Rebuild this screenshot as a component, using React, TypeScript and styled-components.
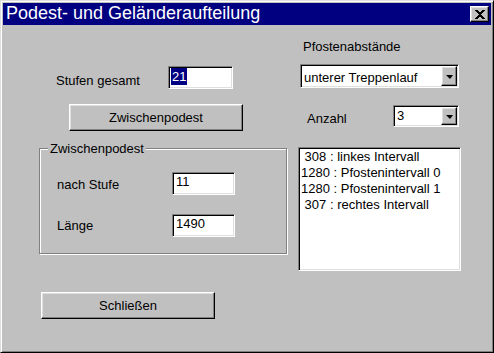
import React from 'react';
import styled, { createGlobalStyle } from 'styled-components';

const GlobalStyle = createGlobalStyle`
  html, body {
    margin: 0;
    padding: 0;
    background: #c0c0c0;
  }
  body {
    font-family: "Liberation Sans", Arial, sans-serif;
    font-size: 13px;
    color: #000;
  }
`;

const Window = styled.div`
  width: 494px;
  height: 353px;
  box-sizing: border-box;
  background: #c0c0c0;
  border: 1px solid;
  border-color: #dfdfdf #000 #000 #dfdfdf;
  box-shadow: inset 1px 1px 0 #fff, inset -1px -1px 0 #808080;
  padding: 2px;
  display: flex;
  flex-direction: column;
`;

const TitleBar = styled.div`
  height: 22px;
  background: #000080;
  display: flex;
  align-items: center;
  padding: 0 2px 0 3px;
`;

const TitleText = styled.div`
  flex: 1;
  color: #fff;
  font-size: 18px;
  line-height: 20px;
  white-space: nowrap;
  align-self: flex-start;
`;

const raised = `
  background: #c0c0c0;
  border: 1px solid;
  border-color: #fff #000 #000 #fff;
  box-shadow: inset -1px -1px 0 #808080, inset 1px 1px 0 #dfdfdf;
  box-sizing: border-box;
`;

const sunken = `
  background: #fff;
  border: 1px solid;
  border-color: #808080 #fff #fff #808080;
  box-shadow: inset 1px 1px 0 #000, inset -1px -1px 0 #dfdfdf;
  box-sizing: border-box;
`;

const CloseButton = styled.div`
  ${raised}
  width: 19px;
  height: 16px;
  display: flex;
  align-items: center;
  justify-content: center;
`;

const Body = styled.div`
  flex: 1;
  display: flex;
`;

const LeftCol = styled.div`
  margin-left: 36px;
  width: 248px;
  display: flex;
  flex-direction: column;
`;

const RightCol = styled.div`
  margin-left: 11px;
  width: 163px;
  display: flex;
  flex-direction: column;
`;

const FieldRow = styled.div<{ $top: number; $indent: number }>`
  display: flex;
  align-items: flex-start;
  margin-top: ${(p) => p.$top}px;
  padding-left: ${(p) => p.$indent}px;
`;

const Label = styled.div<{ $width?: number; $drop?: number }>`
  width: ${(p) => (p.$width ? `${p.$width}px` : 'auto')};
  padding-top: ${(p) => p.$drop ?? 0}px;
  line-height: 16px;
  white-space: nowrap;
`;

const Edit = styled.div<{ $width: number; $padTop: number }>`
  ${sunken}
  width: ${(p) => p.$width}px;
  height: 23px;
  padding: ${(p) => p.$padTop}px 3px 0;
  line-height: 16px;
`;

const Selection = styled.span`
  display: inline-block;
  background: #000080;
  color: #fff;
  line-height: 17px;
  padding: 0 1px;
  margin-left: -1px;
`;

const Button = styled.div<{ $top: number; $left: number }>`
  ${raised}
  width: 174px;
  height: 27px;
  margin-top: ${(p) => p.$top}px;
  margin-left: ${(p) => p.$left}px;
  display: flex;
  align-items: center;
  justify-content: center;
  line-height: 16px;
`;

const Group = styled.div`
  position: relative;
  margin-top: 17px;
  height: 106px;
  box-sizing: border-box;
  border: 1px solid #808080;
  box-shadow: inset 1px 1px 0 #fff, 1px 1px 0 #fff;
  padding: 23px 0 0 17px;
  display: flex;
  flex-direction: column;
`;

const GroupTitle = styled.div`
  position: absolute;
  top: -8px;
  left: 8px;
  padding: 0 2px;
  background: #c0c0c0;
  line-height: 16px;
`;

const Combo = styled.div<{ $top: number; $left: number; $width: number; $height: number }>`
  ${sunken}
  width: ${(p) => p.$width}px;
  height: ${(p) => p.$height}px;
  margin-top: ${(p) => p.$top}px;
  margin-left: ${(p) => p.$left}px;
  padding: 1px;
  display: flex;
`;

const ComboText = styled.div<{ $padTop: number }>`
  flex: 1;
  padding: ${(p) => p.$padTop}px 0 0 2px;
  line-height: 16px;
  white-space: nowrap;
  overflow: hidden;
`;

const ArrowButton = styled.div`
  ${raised}
  width: 16px;
  height: 100%;
  display: flex;
  align-items: center;
  justify-content: center;
`;

const Arrow = styled.div`
  width: 0;
  height: 0;
  border-left: 4px solid transparent;
  border-right: 3px solid transparent;
  border-top: 4px solid #000;
  margin-top: 1px;
`;

const ListBox = styled.div`
  ${sunken}
  width: 163px;
  height: 124px;
  margin-top: 20px;
  padding: 1px 2px;
`;

const ListItem = styled.div`
  line-height: 16px;
  white-space: pre;
`;

const items = [' 308 : linkes Intervall', '1280 : Pfostenintervall 0', '1280 : Pfostenintervall 1', ' 307 : rechtes Intervall'];

const DropDown: React.FC<{ top: number; left: number; width: number; height: number; padTop: number; value: string }> = ({
  top,
  left,
  width,
  height,
  padTop,
  value,
}) => (
  <Combo $top={top} $left={left} $width={width} $height={height}>
    <ComboText $padTop={padTop}>{value}</ComboText>
    <ArrowButton>
      <Arrow />
    </ArrowButton>
  </Combo>
);

const App: React.FC = () => (
  <>
    <GlobalStyle />
    <Window>
      <TitleBar>
        <TitleText>Podest- und Geländeraufteilung</TitleText>
        <CloseButton>
          <svg width="10" height="9" viewBox="0 0 10 9" shapeRendering="crispEdges">
            <path d="M1 0 L9 9 M9 0 L1 9" stroke="#000" strokeWidth="2.2" />
          </svg>
        </CloseButton>
      </TitleBar>
      <Body>
        <LeftCol>
          <FieldRow $top={41} $indent={17}>
            <Label $width={112} $drop={7}>Stufen gesamt</Label>
            <Edit $width={65} $padTop={1}>
              <Selection>21</Selection>
            </Edit>
          </FieldRow>
          <Button $top={15} $left={30}>Zwischenpodest</Button>
          <Group>
            <GroupTitle>Zwischenpodest</GroupTitle>
            <FieldRow $top={0} $indent={0}>
              <Label $width={115} $drop={5}>nach Stufe</Label>
              <Edit $width={63} $padTop={1}>11</Edit>
            </FieldRow>
            <FieldRow $top={19} $indent={0}>
              <Label $width={115} $drop={4}>Länge</Label>
              <Edit $width={63} $padTop={1}>1490</Edit>
            </FieldRow>
          </Group>
          <Button $top={38} $left={2}>Schließen</Button>
        </LeftCol>
        <RightCol>
          <FieldRow $top={14} $indent={5}>
            <Label>Pfostenabstände</Label>
          </FieldRow>
          <DropDown top={9} left={2} width={159} height={24} padTop={4} value="unterer Treppenlauf" />
          <FieldRow $top={17} $indent={9}>
            <Label $width={86} $drop={6}>Anzahl</Label>
            <DropDown top={0} left={0} width={66} height={22} padTop={1} value="3" />
          </FieldRow>
          <ListBox>
            {items.map((item, i) => (
              <ListItem key={i}>{item}</ListItem>
            ))}
          </ListBox>
        </RightCol>
      </Body>
    </Window>
  </>
);

export default App;
